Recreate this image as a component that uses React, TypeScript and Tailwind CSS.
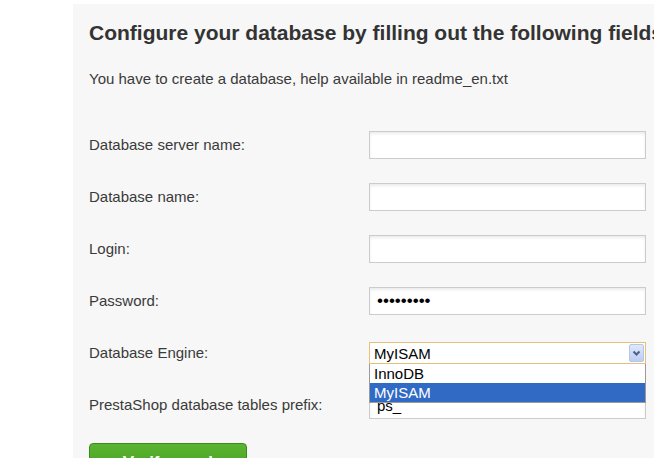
const FIELDS = [
  { label: 'Database server name:', value: '', type: 'text' },
  { label: 'Database name:', value: '', type: 'text' },
  { label: 'Login:', value: '', type: 'text' },
  { label: 'Password:', value: '•••••••••', type: 'password' },
]

const inputClass =
  'block w-[277px] h-[28px] px-[7px] bg-white border border-[#cccccc] shadow-[inset_0_2px_3px_rgba(0,0,0,0.08)] text-[15px] text-black'

function Row({ label, children }: { label: string; children: React.ReactNode }) {
  return (
    <div className="flex items-center h-[28px] mb-[24px]">
      <span className="w-[280px] shrink-0 text-[15px] text-[#3a3a3a]">{label}</span>
      {children}
    </div>
  )
}

export default function App() {
  return (
    <div
      className="w-[654px] h-[458px] overflow-hidden bg-white pl-[73px] pt-[4px]"
      style={{ fontFamily: '"Liberation Sans", Arial, sans-serif' }}
    >
      <div className="h-full bg-[#f7f7f7] pl-[16px] pt-[17px] whitespace-nowrap">
        <h2 className="text-[21px] font-bold leading-[24px] text-[#333333]">
          Configure your database by filling out the following fields
        </h2>
        <p className="mt-[25px] text-[15px] leading-[18px] text-[#3a3a3a]">
          You have to create a database, help available in readme_en.txt
        </p>

        <div className="mt-[43px]">
          {FIELDS.map((f) => (
            <Row key={f.label} label={f.label}>
              <div className={`${inputClass} flex items-center`}>
                {f.type === 'password' && (
                  <span className="text-[17px] tracking-[0px] text-black">{f.value}</span>
                )}
              </div>
            </Row>
          ))}

          <Row label="Database Engine:">
            <div className="relative z-10">
              <div className="flex items-center w-[277px] h-[22px] bg-white border border-[#e5c07b] pl-[4px] pr-[1px]">
                <span className="flex-1 text-[15px] text-black leading-none">MyISAM</span>
                <span className="flex items-center justify-center w-[15px] h-[18px] rounded-[2px] border border-[#b2c6ee] bg-gradient-to-b from-[#dfe8fb] to-[#bccdf3]">
                  <svg width="9" height="7" viewBox="0 0 9 7">
                    <path d="M1.5 1.5 L4.5 4.5 L7.5 1.5" fill="none" stroke="#4d6185" strokeWidth="2" />
                  </svg>
                </span>
              </div>
              <div className="absolute left-0 top-[22px] w-[277px] bg-white border border-[#9a9a9a] border-t-0">
                <div className="h-[19px] pl-[4px] text-[15px] leading-[19px] text-black">InnoDB</div>
                <div className="h-[19px] pl-[4px] text-[15px] leading-[19px] text-white bg-[#316ac5]">MyISAM</div>
              </div>
            </div>
          </Row>

          <Row label="PrestaShop database tables prefix:">
            <div className={`${inputClass} flex items-center pt-[3px]`}>
              <span>ps_</span>
            </div>
          </Row>

          <button
            type="button"
            className="w-[158px] h-[40px] rounded-[4px] bg-gradient-to-b from-[#5bb431] to-[#3f9b1b] border border-[#3a8d18] text-white text-[17px] font-bold"
          >
            Verify now!
          </button>
        </div>
      </div>
    </div>
  )
}
